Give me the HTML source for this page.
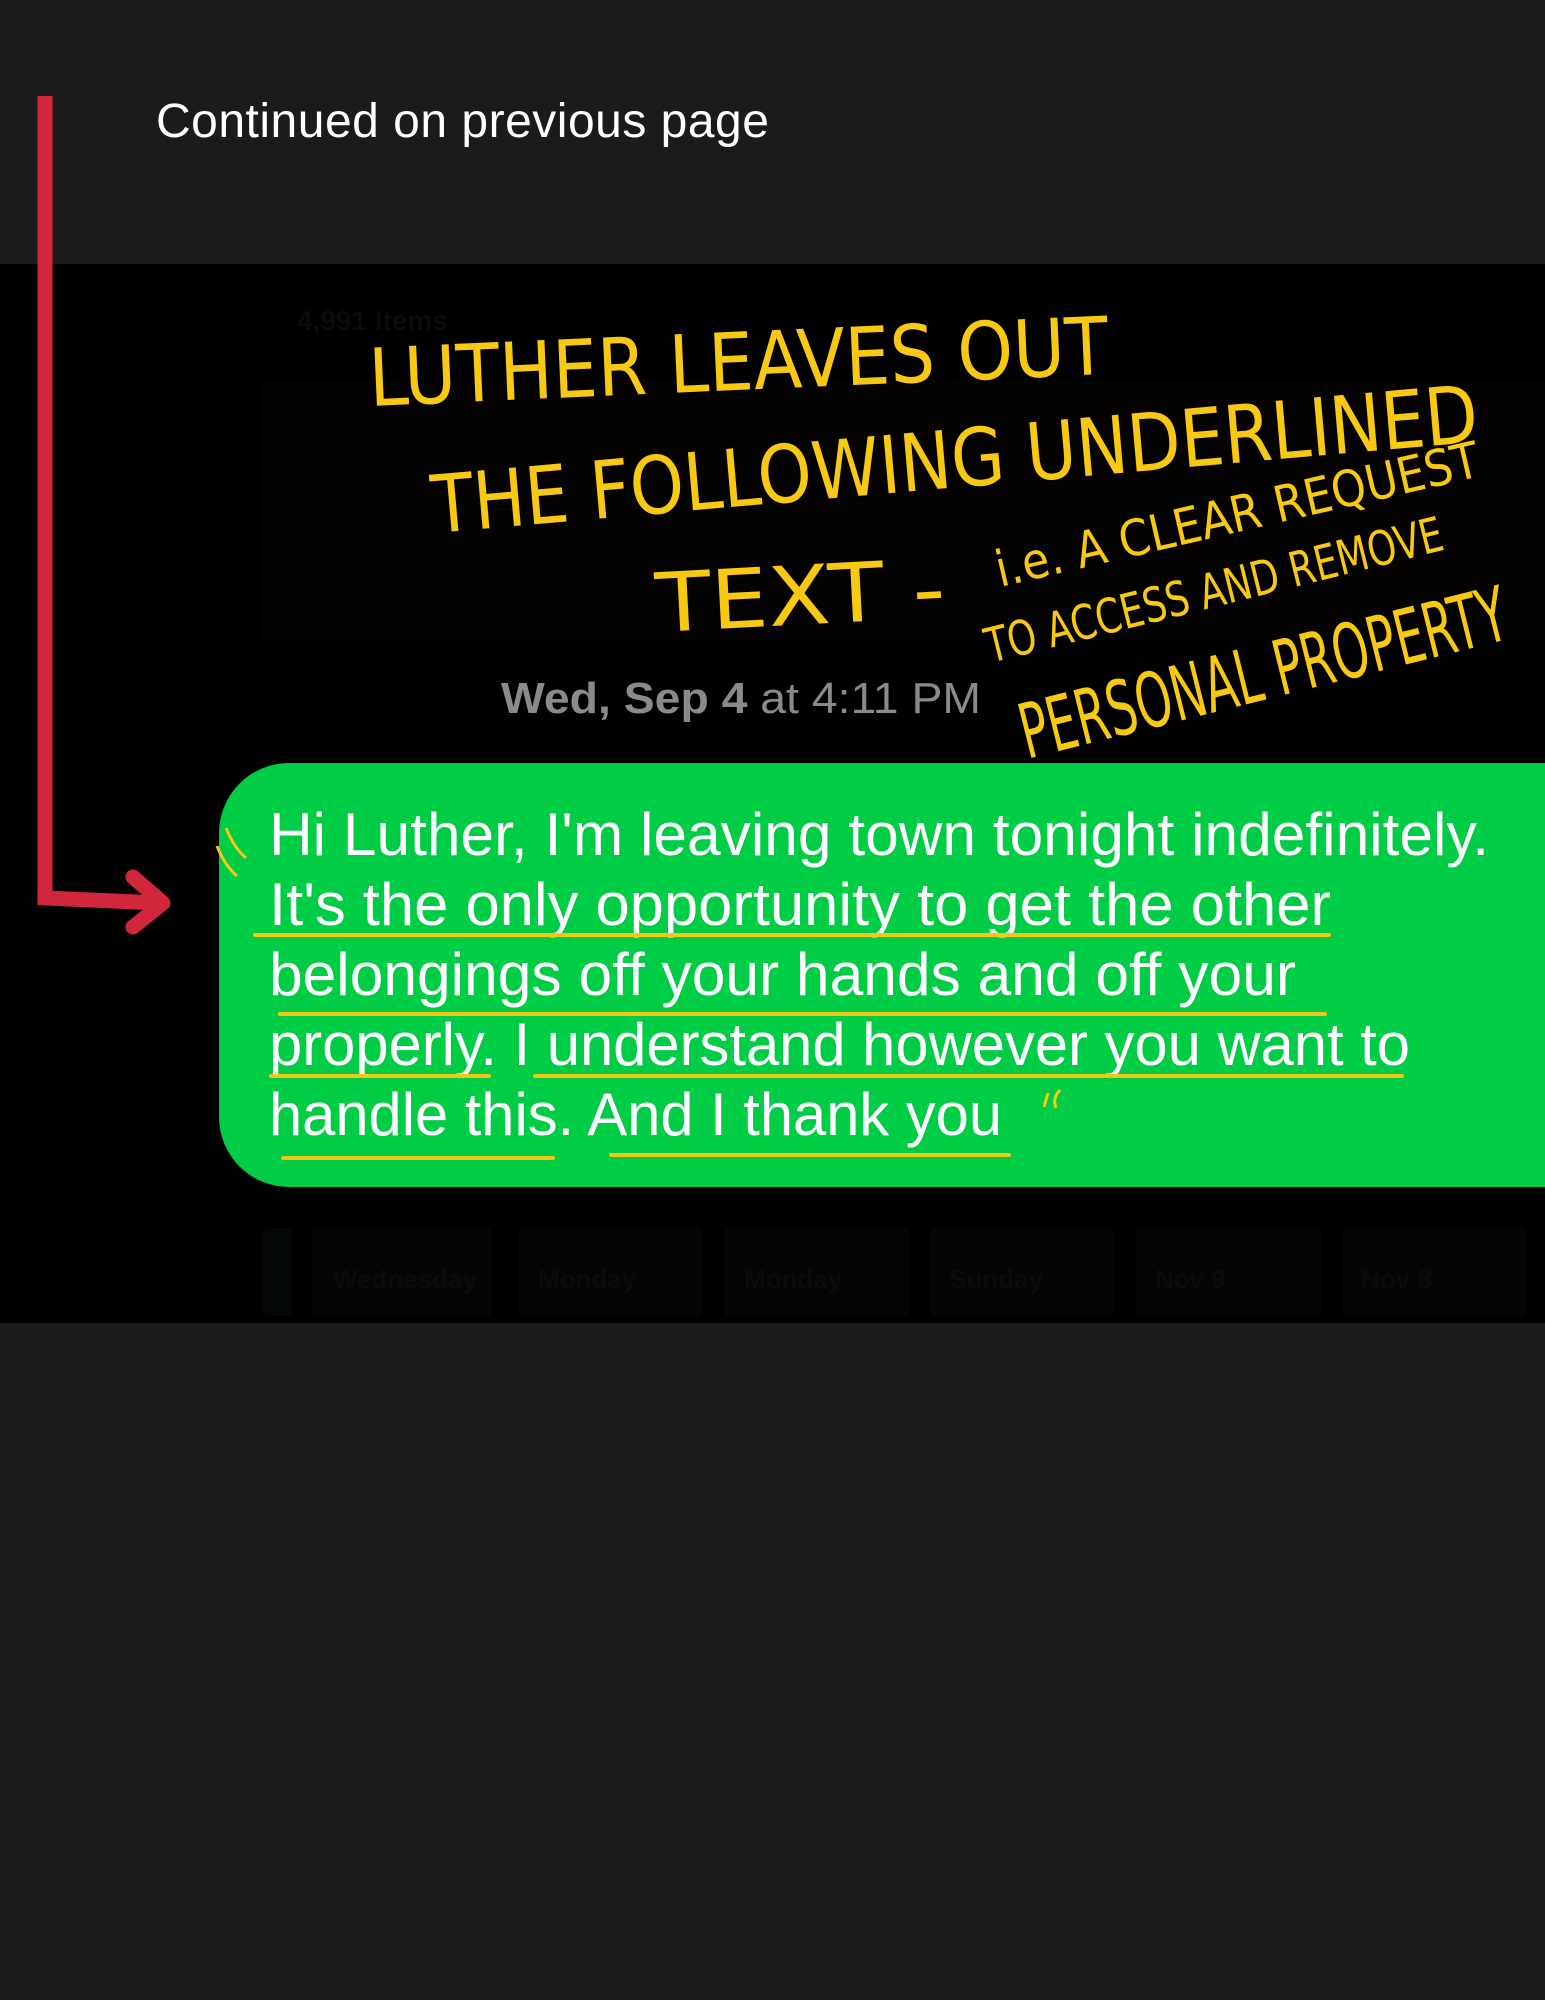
<!DOCTYPE html>
<html><head><meta charset="utf-8"><style>
html,body{margin:0;padding:0;background:#1b1b1b;}
body{width:1545px;height:2000px;position:relative;overflow:hidden;font-family:"Liberation Sans",sans-serif;}
.abs{position:absolute;}
.ul{position:absolute;height:4px;background:#f5c518;border-radius:2px;}
.tile{position:absolute;top:1228px;height:88px;background:#060504;border-radius:6px;}
.tl{position:absolute;top:1264px;color:#0c0b0a;font-size:26px;font-weight:bold;}
</style></head><body>
<div class="abs" style="left:156px;top:94px;color:#fff;font-size:48px;letter-spacing:0.5px;">Continued on previous page</div>
<div class="abs" style="left:0;top:264px;width:1545px;height:1059px;background:#000;"></div>
<div class="abs" style="left:297px;top:240px;color:#060606;font-size:56px;font-weight:bold;height:24px;overflow:hidden;top:264px;line-height:0;"></div>
<div class="abs" style="left:297px;top:305px;color:#0b0b0b;font-size:28px;font-weight:bold;">4,991 Items</div>
<div class="abs" style="left:260px;top:380px;width:1285px;height:260px;background:#040302;"></div>
<div class="tile" style="left:262px;width:30px;background:#030805"></div>
<div class="tile" style="left:312px;width:180px"></div>
<div class="tile" style="left:518px;width:185px"></div>
<div class="tile" style="left:724px;width:185px"></div>
<div class="tile" style="left:930px;width:185px"></div>
<div class="tile" style="left:1136px;width:185px"></div>
<div class="tile" style="left:1342px;width:185px"></div>
<div class="tl" style="left:333px">Wednesday</div><div class="tl" style="left:538px">Monday</div><div class="tl" style="left:744px">Monday</div><div class="tl" style="left:949px">Sunday</div><div class="tl" style="left:1155px">Nov 9</div><div class="tl" style="left:1361px">Nov 8</div>
<svg class="abs" style="left:0;top:0" width="1545" height="2000">
<path d="M45 96 L45 898 L160 903" fill="none" stroke="#d0283a" stroke-width="15"/>
<path d="M133 877 L163 903 L133 927" fill="none" stroke="#d0283a" stroke-width="15" stroke-linecap="round" stroke-linejoin="round"/>
</svg>
<svg class="abs" style="left:0;top:0" width="1545" height="2000" font-family="Liberation Sans, sans-serif">
<text x="501" y="713" font-size="44" fill="#8a8a8e" textLength="480" lengthAdjust="spacingAndGlyphs"><tspan font-weight="bold">Wed, Sep 4</tspan> at 4:11 PM</text>
</svg>
<div class="abs" style="left:219px;top:763px;width:1400px;height:424px;background:#00cc46;border-radius:70px;"></div>
<svg class="abs" style="left:0;top:0" width="1545" height="2000" font-family="Liberation Sans, sans-serif" fill="#fff" font-size="60">
<text x="269" y="855" textLength="1220" lengthAdjust="spacingAndGlyphs">Hi Luther, I'm leaving town tonight indefinitely.</text>
<text x="269" y="925" textLength="1062" lengthAdjust="spacingAndGlyphs">It's the only opportunity to get the other</text>
<text x="269" y="995" textLength="1027" lengthAdjust="spacingAndGlyphs">belongings off your hands and off your</text>
<text x="269" y="1065" textLength="1141" lengthAdjust="spacingAndGlyphs">properly. I understand however you want to</text>
<text x="269" y="1135" textLength="733" lengthAdjust="spacingAndGlyphs">handle this. And I thank you</text>
</svg>
<div class="ul" style="left:253px;width:1078px;top:933px"></div>
<div class="ul" style="left:278px;width:1049px;top:1012px"></div>
<div class="ul" style="left:269px;width:222px;top:1074px"></div>
<div class="ul" style="left:533px;width:871px;top:1074px"></div>
<div class="ul" style="left:281px;width:274px;top:1156px"></div>
<div class="ul" style="left:609px;width:402px;top:1153px"></div>
<svg class="abs" style="left:0;top:0" width="1545" height="2000" font-family="DejaVu Sans ExtraLight, DejaVu Sans Condensed, sans-serif" fill="#f7c814" font-weight="200">
<path d="M226 828 q8 20 20 30 M217 846 q8 20 20 30" stroke="#f7c814" stroke-width="3" fill="none"/>
<path d="M1048 1093 l-4 14 M1060 1090 q-8 8 -4 18" stroke="#f7c814" stroke-width="3" fill="none"/>
<text x="370" y="406" font-size="80" textLength="740" lengthAdjust="spacingAndGlyphs" transform="rotate(-2.5 370 406)">LUTHER  LEAVES  OUT</text>
<text x="434" y="533" font-size="80" textLength="1050" lengthAdjust="spacingAndGlyphs" transform="rotate(-5 434 533)">THE  FOLLOWING  UNDERLINED</text>
<text x="657" y="632" font-size="82" textLength="290" lengthAdjust="spacingAndGlyphs" transform="rotate(-3 657 632)">TEXT  -</text>
<text x="1000" y="587" font-size="50" textLength="495" lengthAdjust="spacingAndGlyphs" transform="rotate(-13 1000 587)">i.e. A CLEAR  REQUEST</text>
<text x="990" y="663" font-size="48" textLength="470" lengthAdjust="spacingAndGlyphs" transform="rotate(-14 990 663)">TO ACCESS AND  REMOVE</text>
<text x="1027" y="759" font-size="76" textLength="500" lengthAdjust="spacingAndGlyphs" transform="rotate(-14 1027 759)">PERSONAL  PROPERTY</text>
</svg>
</body></html>
